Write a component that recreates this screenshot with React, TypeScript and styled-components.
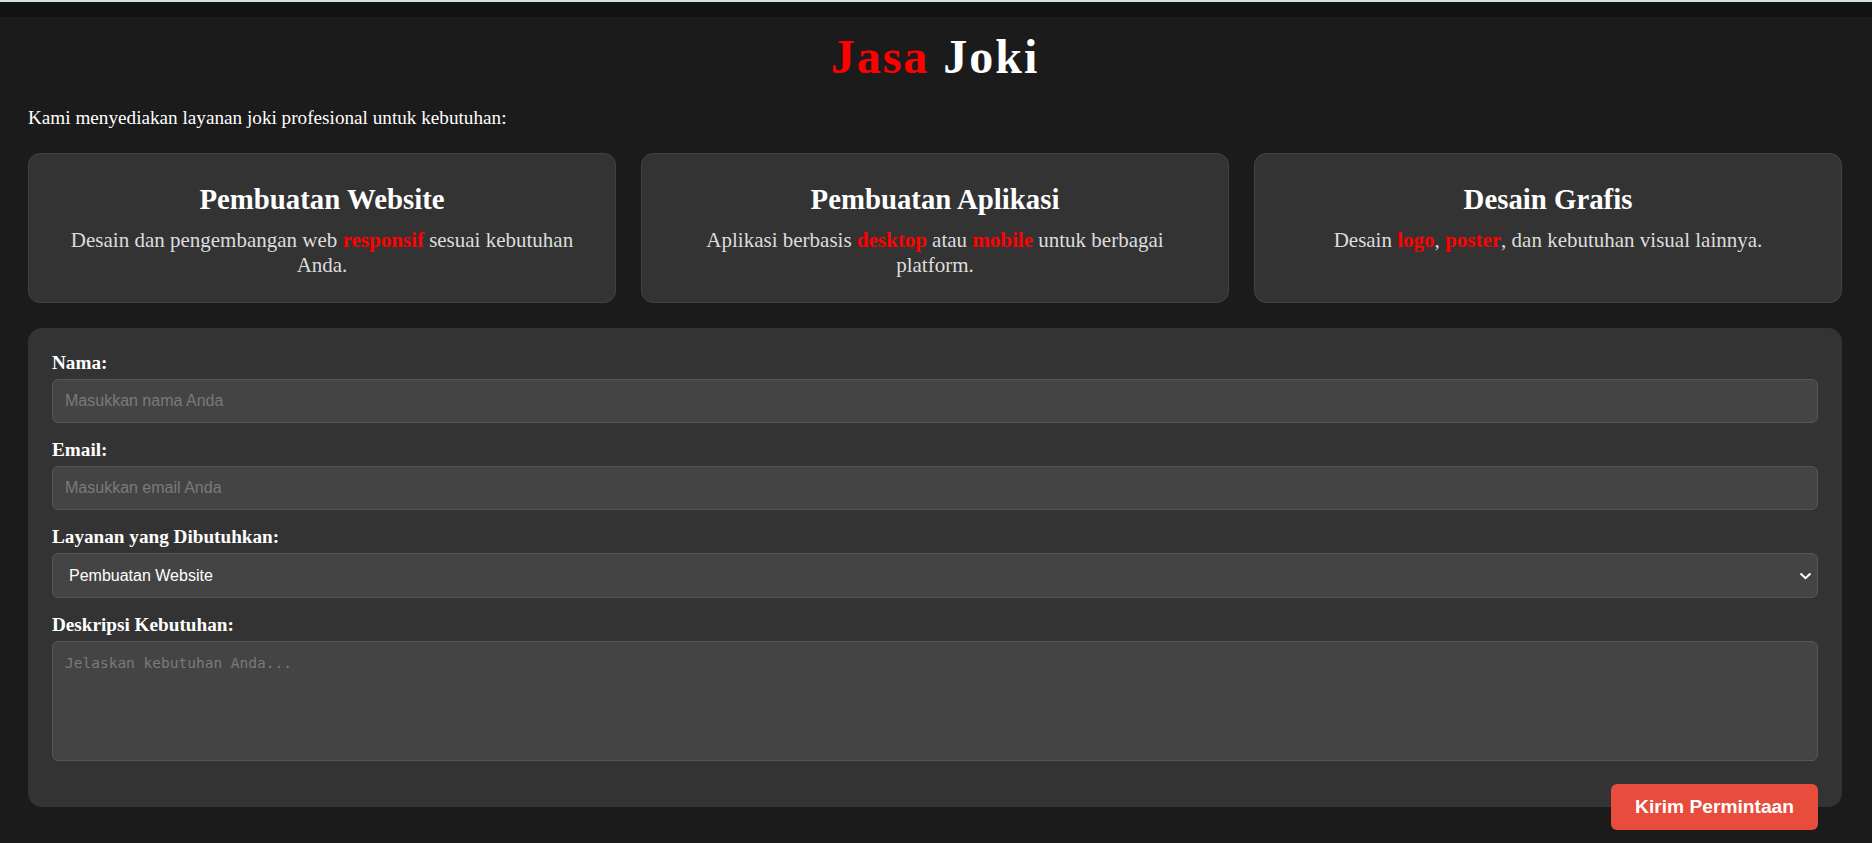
import React from "react";
import styled, { createGlobalStyle } from "styled-components";

const GlobalStyle = createGlobalStyle`
  html, body {
    margin: 0;
    padding: 0;
  }
  body {
    background: #121212;
    border-top: 2px solid #d4e2e7;
    font-family: "Liberation Serif", "Times New Roman", serif;
    color: #ffffff;
  }
`;

const Page = styled.div`
  padding-top: 15px;
`;

const Container = styled.main`
  background: #1b1b1b;
  min-height: calc(100vh - 17px);
  box-sizing: border-box;
  padding: 12px 30px 12px 28px;
`;

const Title = styled.h1`
  margin: 0;
  text-align: center;
  font-size: 48px;
  font-weight: 700;
  letter-spacing: 2px;
  line-height: normal;
  color: #ffffff;
`;

const Red = styled.span`
  color: #ff0000;
`;

const Intro = styled.p`
  margin: 23px 0 24px;
  font-size: 19.2px;
  line-height: 22px;
  color: #ffffff;
`;

const CardGrid = styled.section`
  display: grid;
  grid-template-columns: repeat(3, 1fr);
  gap: 25px;
`;

const Card = styled.article`
  background: #333333;
  border: 1px solid #424242;
  border-radius: 12px;
  padding: 29px 26px 24px;
  text-align: center;
`;

const CardTitle = styled.h2`
  margin: 0 0 12px;
  font-size: 28.8px;
  font-weight: 700;
  line-height: normal;
  color: #ffffff;
`;

const CardText = styled.p`
  margin: 0;
  font-size: 21px;
  line-height: 25px;
  color: #dddddd;
`;

const Highlight = styled.strong`
  color: #ff0000;
  font-weight: 700;
`;

const FormPanel = styled.form`
  display: block;
  margin-top: 25px;
  background: #333333;
  border-radius: 14px;
  padding: 24px 24px 46px;
`;

const Field = styled.div<{ $last?: boolean }>`
  margin-bottom: ${(p) => (p.$last ? "0" : "16px")};
`;

const Label = styled.label`
  display: block;
  margin-bottom: 5px;
  font-size: 19.2px;
  line-height: 22px;
  font-weight: 700;
  color: #ffffff;
`;

const controlBase = `
  display: block;
  width: 100%;
  box-sizing: border-box;
  background: #444444;
  border: 1px solid #565656;
  border-radius: 6px;
  color: #ffffff;
  outline: none;
  margin: 0;
`;

const TextInput = styled.input`
  ${controlBase}
  height: 44px;
  padding: 0 12px;
  font-family: "Liberation Sans", Arial, sans-serif;
  font-size: 16px;
  &::placeholder {
    color: #7a7a7a;
  }
`;

const SelectWrap = styled.div`
  position: relative;
`;

const Select = styled.select`
  ${controlBase}
  appearance: none;
  -webkit-appearance: none;
  height: 45px;
  padding: 0 32px 0 16px;
  font-family: "Liberation Sans", Arial, sans-serif;
  font-size: 16px;
`;

const Chevron = styled.svg`
  position: absolute;
  right: 6px;
  top: 50%;
  width: 13px;
  height: 8px;
  margin-top: -4px;
  pointer-events: none;
`;

const TextArea = styled.textarea`
  ${controlBase}
  height: 120px;
  padding: 13px 12px;
  resize: none;
  font-family: "DejaVu Sans Mono", "Liberation Mono", monospace;
  font-size: 14.5px;
  &::placeholder {
    color: #7a7a7a;
  }
`;

const SubmitButton = styled.button`
  float: right;
  margin-top: 23px;
  background: #e74c3c;
  color: #ffffff;
  border: none;
  border-radius: 6px;
  padding: 12px 24px;
  font-family: "Liberation Sans", Arial, sans-serif;
  font-size: 19.2px;
  font-weight: 700;
  line-height: 22px;
  cursor: pointer;
`;

const services = [
  {
    title: "Pembuatan Website",
    text: (
      <>
        Desain dan pengembangan web <Highlight>responsif</Highlight> sesuai kebutuhan Anda.
      </>
    ),
  },
  {
    title: "Pembuatan Aplikasi",
    text: (
      <>
        Aplikasi berbasis <Highlight>desktop</Highlight> atau <Highlight>mobile</Highlight> untuk berbagai platform.
      </>
    ),
  },
  {
    title: "Desain Grafis",
    text: (
      <>
        Desain <Highlight>logo</Highlight>, <Highlight>poster</Highlight>, dan kebutuhan visual lainnya.
      </>
    ),
  },
];

export default function App() {
  return (
    <Page>
      <GlobalStyle />
      <Container>
        <Title>
          <Red>Jasa</Red> Joki
        </Title>
        <Intro>Kami menyediakan layanan joki profesional untuk kebutuhan:</Intro>
        <CardGrid>
          {services.map((s) => (
            <Card key={s.title}>
              <CardTitle>{s.title}</CardTitle>
              <CardText>{s.text}</CardText>
            </Card>
          ))}
        </CardGrid>
        <FormPanel onSubmit={(e) => e.preventDefault()}>
          <Field>
            <Label htmlFor="nama">Nama:</Label>
            <TextInput id="nama" type="text" placeholder="Masukkan nama Anda" />
          </Field>
          <Field>
            <Label htmlFor="email">Email:</Label>
            <TextInput id="email" type="email" placeholder="Masukkan email Anda" />
          </Field>
          <Field>
            <Label htmlFor="layanan">Layanan yang Dibutuhkan:</Label>
            <SelectWrap>
              <Select id="layanan" defaultValue="website">
                <option value="website">Pembuatan Website</option>
                <option value="aplikasi">Pembuatan Aplikasi</option>
                <option value="desain">Desain Grafis</option>
              </Select>
              <Chevron viewBox="0 0 13 8" aria-hidden="true">
                <path d="M1.5 1.5 L6.5 6.2 L11.5 1.5" fill="none" stroke="#ffffff" strokeWidth="2" />
              </Chevron>
            </SelectWrap>
          </Field>
          <Field $last>
            <Label htmlFor="deskripsi">Deskripsi Kebutuhan:</Label>
            <TextArea id="deskripsi" placeholder="Jelaskan kebutuhan Anda..." />
          </Field>
          <SubmitButton type="submit">Kirim Permintaan</SubmitButton>
        </FormPanel>
      </Container>
    </Page>
  );
}
